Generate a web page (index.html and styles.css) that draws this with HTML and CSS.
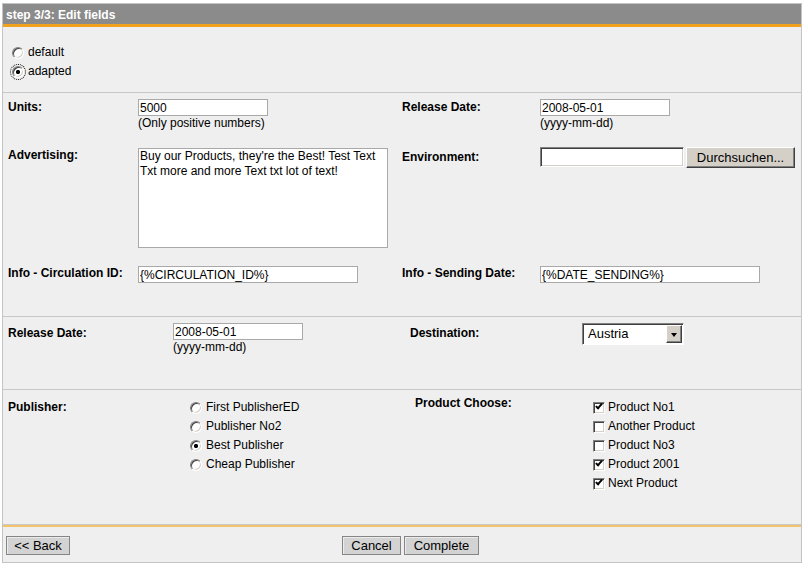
FILE: index.html
```html
<!DOCTYPE html>
<html lang="en">
<head>
<meta charset="utf-8">
<title>step 3/3: Edit fields</title>
<link rel="stylesheet" href="styles.css">
</head>
<body>
<div class="panel">
  <div class="panel-head">step 3/3: Edit fields</div>

  <div class="section mode">
    <label class="choice"><input type="radio" class="radio" name="mode"><span>default</span></label>
    <label class="choice"><input type="radio" class="radio focused" name="mode" checked><span>adapted</span></label>
  </div>

  <div class="section grid grid-a">
    <div class="lbl m1">Units:</div>
    <div class="field">
      <input class="text w130" type="text" value="5000">
      <span class="hint">(Only positive numbers)</span>
    </div>
    <div class="lbl m1">Release Date:</div>
    <div class="field">
      <input class="text w130" type="text" value="2008-05-01">
      <span class="hint">(yyyy-mm-dd)</span>
    </div>

    <div class="lbl m2">Advertising:</div>
    <div class="field">
      <textarea class="area">Buy our Products, they're the Best! Test Text
Txt more and more Text txt lot of text!</textarea>
    </div>
    <div class="lbl m3">Environment:</div>
    <div class="field">
      <div class="file">
        <span class="file-box"></span>
        <button class="classic-btn" type="button">Durchsuchen...</button>
      </div>
    </div>

    <div class="lbl m2">Info - Circulation ID:</div>
    <div class="field">
      <input class="text w220" type="text" value="{%CIRCULATION_ID%}">
    </div>
    <div class="lbl m2">Info - Sending Date:</div>
    <div class="field">
      <input class="text w220" type="text" value="{%DATE_SENDING%}">
    </div>
  </div>

  <div class="section grid grid-b">
    <div class="lbl m4">Release Date:</div>
    <div class="field">
      <input class="text w130" type="text" value="2008-05-01">
      <span class="hint">(yyyy-mm-dd)</span>
    </div>
    <div class="lbl m4">Destination:</div>
    <div class="field">
      <div class="select">
        <span class="select-text">Austria</span>
        <span class="select-btn"><span class="tri"></span></span>
      </div>
    </div>
  </div>

  <div class="section grid grid-c">
    <div class="lbl m5">Publisher:</div>
    <div class="list">
      <label class="choice"><input type="radio" class="radio" name="pub"><span>First PublisherED</span></label>
      <label class="choice"><input type="radio" class="radio" name="pub"><span>Publisher No2</span></label>
      <label class="choice"><input type="radio" class="radio" name="pub" checked><span>Best Publisher</span></label>
      <label class="choice"><input type="radio" class="radio" name="pub"><span>Cheap Publisher</span></label>
    </div>
    <div class="lbl m6">Product Choose:</div>
    <div class="list">
      <label class="choice tight"><input type="checkbox" class="check" checked><span>Product No1</span></label>
      <label class="choice tight"><input type="checkbox" class="check"><span>Another Product</span></label>
      <label class="choice tight"><input type="checkbox" class="check"><span>Product No3</span></label>
      <label class="choice tight"><input type="checkbox" class="check" checked><span>Product 2001</span></label>
      <label class="choice tight"><input type="checkbox" class="check" checked><span>Next Product</span></label>
    </div>
  </div>

  <div class="footer">
    <div><button class="flat-btn btn-back" type="button">&lt;&lt; Back</button></div>
    <div class="footer-actions">
      <button class="flat-btn btn-cancel" type="button">Cancel</button>
      <button class="flat-btn btn-complete" type="button">Complete</button>
    </div>
  </div>
</div>
</body>
</html>
```
FILE: styles.css
```css
html, body {
  margin: 0;
  padding: 0;
  background: #ffffff;
}

body {
  font-family: "Liberation Sans", Arial, sans-serif;
  font-size: 12px;
  color: #000;
}

.panel {
  box-sizing: border-box;
  width: 800px;
  margin: 3px 0 0 2px;
  border: 1px solid #c4c4c4;
  background: #efefef;
}

.panel-head {
  box-sizing: border-box;
  height: 23px;
  padding: 3px 0 0 3px;
  line-height: 17px;
  background: #8b8b8b;
  border-bottom: 3px solid #f0a21e;
  color: #fff;
  font-weight: bold;
  font-size: 12px;
}

.section {
  border-bottom: 1px solid #c8c8c8;
}

.mode {
  padding: 16px 9px 11px;
}

.choice {
  display: flex;
  align-items: center;
  gap: 4px;
  height: 19px;
  line-height: 19px;
  white-space: nowrap;
}

.choice.tight {
  gap: 3px;
}

.radio {
  -webkit-appearance: none;
  appearance: none;
  box-sizing: border-box;
  width: 12px;
  height: 12px;
  margin: 0;
  border-radius: 50%;
  border: 1px solid;
  border-color: #808080 #ffffff #ffffff #808080;
  box-shadow: inset 1px 1px 0 #404040, inset -1px -1px 0 #d4d0c8;
  background: #fff;
  flex: none;
}

.radio:checked {
  background: radial-gradient(circle at 50% 50%, #000 0 1.8px, #fff 2.4px);
}

.radio.focused {
  outline: 1px dotted #000;
  outline-offset: 1px;
}

.check {
  -webkit-appearance: none;
  appearance: none;
  box-sizing: border-box;
  position: relative;
  width: 12px;
  height: 12px;
  margin: 0;
  border: 1px solid;
  border-color: #808080 #ffffff #ffffff #808080;
  box-shadow: inset 1px 1px 0 #404040, inset -1px -1px 0 #d4d0c8;
  background: #fff;
  flex: none;
}

.check:checked::after {
  content: "";
  position: absolute;
  left: 2px;
  top: 1px;
  width: 5px;
  height: 2px;
  border-left: 2px solid #000;
  border-bottom: 2px solid #000;
  transform: rotate(-48deg);
  transform-origin: 40% 60%;
}

.grid {
  display: grid;
  align-items: start;
}

.grid-a {
  grid-template-columns: 130px 264px 138px 1fr;
  row-gap: 18px;
  padding: 6px 5px 33px;
}

.grid-b {
  grid-template-columns: 165px 237px 172px 1fr;
  padding: 6px 5px 35px;
}

.grid-c {
  grid-template-columns: 182px 225px 178px 1fr;
  padding: 8px 5px 31px;
}

.lbl {
  font-weight: bold;
  line-height: 14px;
  white-space: nowrap;
}

.m1 { margin-top: 1px; }
.m2 { margin-top: 0; }
.m3 { margin-top: 2px; }
.m4 { margin-top: 3px; }
.m5 { margin-top: 2px; }
.m6 { margin-top: -2px; }

.field {
  display: flex;
  flex-direction: column;
  align-items: flex-start;
}

.hint {
  line-height: 14px;
}

.text {
  box-sizing: border-box;
  height: 17px;
  margin: 0;
  padding: 0 1px;
  border: 1px solid #a9a9a9;
  background: #fff;
  font-family: "Liberation Sans", Arial, sans-serif;
  font-size: 12px;
  color: #000;
  outline: none;
}

.w130 { width: 130px; }
.w220 { width: 220px; }

.area {
  box-sizing: border-box;
  width: 250px;
  height: 100px;
  margin: 0;
  padding: 0 1px;
  border: 1px solid #a9a9a9;
  background: #fff;
  font-family: "Liberation Sans", Arial, sans-serif;
  font-size: 12px;
  line-height: 15px;
  color: #000;
  resize: none;
  overflow: hidden;
  white-space: pre;
  outline: none;
}

.file {
  display: flex;
  align-items: flex-start;
  gap: 2px;
  margin-top: -1px;
}

.file-box {
  box-sizing: border-box;
  width: 144px;
  height: 20px;
  background: #fff;
  border: 1px solid;
  border-color: #808080 #ffffff #ffffff #808080;
  box-shadow: inset 1px 1px 0 #404040, inset -1px -1px 0 #d4d0c8;
}

.classic-btn {
  box-sizing: border-box;
  width: 109px;
  height: 21px;
  margin: 0;
  padding: 0;
  background: #d4d0c8;
  border: 1px solid;
  border-color: #ffffff #404040 #404040 #ffffff;
  box-shadow: inset -1px -1px 0 #808080;
  font-family: "Liberation Sans", Arial, sans-serif;
  font-size: 13px;
  color: #000;
  line-height: 19px;
}

.select {
  box-sizing: border-box;
  display: flex;
  align-items: stretch;
  width: 102px;
  height: 22px;
  background: #fff;
  border: 1px solid;
  border-color: #808080 #ffffff #ffffff #808080;
  box-shadow: inset 1px 1px 0 #404040;
  padding: 1px 1px 1px 1px;
}

.select-text {
  flex: 1;
  padding-left: 4px;
  font-size: 13px;
  line-height: 18px;
}

.select-btn {
  box-sizing: border-box;
  width: 16px;
  display: flex;
  align-items: center;
  justify-content: center;
  background: #d4d0c8;
  border: 1px solid;
  border-color: #ffffff #404040 #404040 #ffffff;
  box-shadow: inset -1px -1px 0 #808080;
}

.tri {
  width: 0;
  height: 0;
  border-left: 3.5px solid transparent;
  border-right: 3.5px solid transparent;
  border-top: 4px solid #000;
  margin-top: 1px;
}

.list {
  display: flex;
  flex-direction: column;
}

.footer {
  display: grid;
  grid-template-columns: 336px auto;
  border-top: 2px solid #f3c36b;
  padding: 9px 3px 7px;
}

.footer-actions {
  display: flex;
  gap: 3px;
}

.flat-btn {
  box-sizing: border-box;
  height: 19px;
  margin: 0;
  padding: 0;
  background: #d3d3d3;
  border: 1px solid #858585;
  box-shadow: inset 1px 1px 0 #ececec;
  font-family: "Liberation Sans", Arial, sans-serif;
  font-size: 13px;
  line-height: 17px;
  color: #000;
}

.btn-back { width: 64px; }
.btn-cancel { width: 59px; }
.btn-complete { width: 75px; }
```
